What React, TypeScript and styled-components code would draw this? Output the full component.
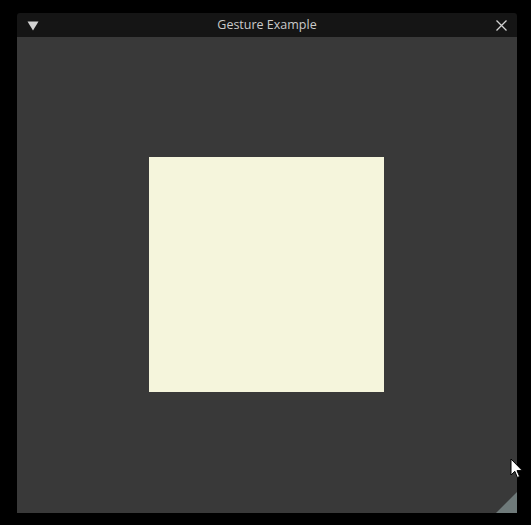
import React from "react";
import styled, { createGlobalStyle } from "styled-components";

const Global = createGlobalStyle`
  html, body {
    margin: 0;
    padding: 0;
    background: #000000;
    width: 531px;
    height: 525px;
    overflow: hidden;
  }
  #root {
    width: 531px;
    height: 525px;
    position: relative;
  }
`;

const Screen = styled.div`
  width: 531px;
  height: 525px;
  padding: 13px 0 0 17px;
  box-sizing: border-box;
  background: #000000;
`;

const Window = styled.div`
  width: 500px;
  height: 500px;
  display: flex;
  flex-direction: column;
  border-radius: 3px 3px 0 0;
  overflow: hidden;
  position: relative;
`;

const TitleBar = styled.div`
  height: 24px;
  flex: 0 0 24px;
  background: #151515;
  display: grid;
  grid-template-columns: 40px 1fr 40px;
  align-items: center;
`;

const Collapse = styled.div`
  display: flex;
  justify-content: flex-start;
  padding-left: 10px;
  padding-top: 1px;
`;

const Title = styled.div`
  text-align: center;
  font-family: "Open Sans", "Noto Sans", sans-serif;
  font-size: 12.5px;
  color: #cacaca;
  line-height: 24px;
`;

const Close = styled.div`
  display: flex;
  justify-content: flex-end;
  padding-right: 10px;
`;

const Content = styled.div`
  flex: 1;
  background: #393939;
  display: flex;
  align-items: center;
  justify-content: center;
  padding: 0 1px 1px 0;
  position: relative;
`;

const Square = styled.div`
  width: 235px;
  height: 235px;
  background: #f5f5dc;
`;

const Grip = styled.svg`
  position: absolute;
  right: 0;
  bottom: 0;
`;

const Cursor = styled.svg`
  position: absolute;
  left: 510px;
  top: 458px;
`;

export default function App() {
  return (
    <>
      <Global />
      <Screen>
        <Window>
          <TitleBar>
            <Collapse>
              <svg width="12" height="10" viewBox="0 0 12 10">
                <polygon points="0.5,0.5 11.5,0.5 6,9.5" fill="#d2d2d2" />
              </svg>
            </Collapse>
            <Title>Gesture Example</Title>
            <Close>
              <svg width="11" height="11" viewBox="0 0 11 11">
                <path d="M0.5 0.5 L10.5 10.5 M10.5 0.5 L0.5 10.5" stroke="#d2d2d2" strokeWidth="1.3" />
              </svg>
            </Close>
          </TitleBar>
          <Content>
            <Square />
            <Grip width="21" height="21" viewBox="0 0 21 21">
              <polygon points="21,0 21,21 0,21" fill="#6f7a7a" />
            </Grip>
          </Content>
        </Window>
      </Screen>
      <Cursor width="14" height="22" viewBox="0 0 14 22">
        <path
          d="M1 1 L1 17 L4.8 13.3 L7.4 19.5 L9.6 18.5 L7 12.6 L12.3 12.6 Z"
          fill="#ffffff"
          stroke="#000000"
          strokeWidth="1"
          strokeLinejoin="miter"
        />
      </Cursor>
    </>
  );
}
